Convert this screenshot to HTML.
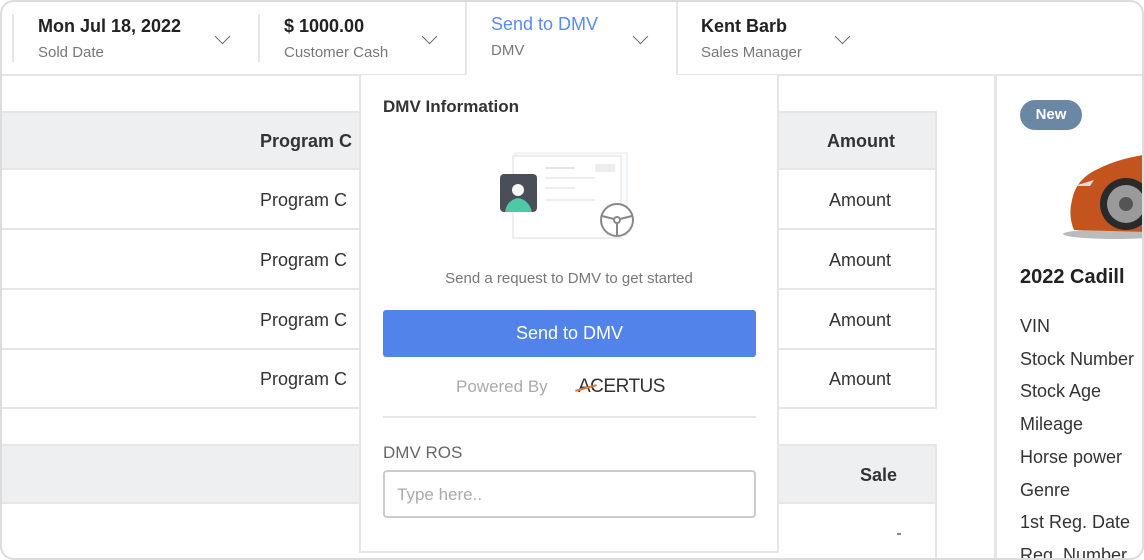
<!DOCTYPE html>
<html><head><meta charset="utf-8"><style>
*{box-sizing:border-box;margin:0;padding:0}
body{width:1144px;height:560px;background:#fff;font-family:"Liberation Sans",sans-serif;overflow:hidden;position:relative}
.frame{position:absolute;left:0;top:0;width:1144px;height:560px;border-radius:14px;overflow:hidden;background:#fff}
.border{position:absolute;left:0;top:0;width:1144px;height:560px;border:2px solid #dcdcdc;border-radius:14px;pointer-events:none}
.abs{position:absolute}
.topline{left:0;top:74px;width:1144px;height:2px;background:#e6e6e6}
.sep{width:2px;background:#e6e6e6;top:14px;height:48px}
.t1{font-size:18px;color:#222;font-weight:bold}
.t2{font-size:15px;color:#777}
.chev{width:11px;height:11px;border-right:1.5px solid #666;border-bottom:1.5px solid #666;transform:rotate(45deg)}
.hdr{background:#eeeff1}
.row{border-bottom:2px solid #e6e6e6}
.cell{font-size:18px;color:#333}
</style></head><body>
<div class="frame">
<div class="abs topline"></div>
<div class="abs sep" style="left:12px"></div>
<div class="abs t1" style="left:38px;top:16px">Mon Jul 18, 2022</div>
<div class="abs t2" style="left:38px;top:44px">Sold Date</div>
<div class="abs chev" style="left:217px;top:31px"></div>
<div class="abs sep" style="left:258px"></div>
<div class="abs t1" style="left:284px;top:16px">$ 1000.00</div>
<div class="abs t2" style="left:284px;top:44px">Customer Cash</div>
<div class="abs chev" style="left:424px;top:31px"></div>
<div class="abs" style="left:465px;top:0;width:213px;height:77px;background:#fff;border-left:2px solid #e6e6e6;border-right:2px solid #e6e6e6"></div>
<div class="abs t1" style="left:491px;top:14px;color:#5a8af0;font-weight:normal">Send to DMV</div>
<div class="abs t2" style="left:491px;top:42px">DMV</div>
<div class="abs chev" style="left:635px;top:31px"></div>
<div class="abs t1" style="left:701px;top:16px">Kent Barb</div>
<div class="abs t2" style="left:701px;top:44px">Sales Manager</div>
<div class="abs chev" style="left:837px;top:31px"></div>

<div class="abs" style="left:0;top:111px;width:937px;height:298px;border:2px solid #e6e6e6;border-left:none"></div>
<div class="abs hdr" style="left:0;top:113px;width:935px;height:57px;border-bottom:2px solid #e6e6e6"></div>
<div class="abs cell" style="left:260px;top:131px;font-weight:bold;color:#333">Program C</div>
<div class="abs cell" style="left:827px;top:131px;font-weight:bold">Amount</div>
<div class="abs row" style="left:0;top:170px;width:935px;height:60px"></div>
<div class="abs row" style="left:0;top:230px;width:935px;height:60px"></div>
<div class="abs row" style="left:0;top:290px;width:935px;height:60px"></div>
<div class="abs cell" style="left:260px;top:190px">Program C</div><div class="abs cell" style="left:829px;top:190px">Amount</div>
<div class="abs cell" style="left:260px;top:250px">Program C</div><div class="abs cell" style="left:829px;top:250px">Amount</div>
<div class="abs cell" style="left:260px;top:310px">Program C</div><div class="abs cell" style="left:829px;top:310px">Amount</div>
<div class="abs cell" style="left:260px;top:369px">Program C</div><div class="abs cell" style="left:829px;top:369px">Amount</div>

<div class="abs" style="left:0;top:444px;width:937px;height:120px;border:2px solid #e6e6e6;border-left:none;border-bottom:none"></div>
<div class="abs hdr" style="left:0;top:446px;width:935px;height:58px;border-bottom:2px solid #e6e6e6"></div>
<div class="abs cell" style="left:860px;top:465px;font-weight:bold">Sale</div>
<div class="abs" style="left:897px;top:533px;width:4px;height:2px;background:#888"></div>

<div class="abs" style="left:994px;top:76px;width:3px;height:484px;background:#e6e6e6"></div>
<div class="abs" style="left:1020px;top:100px;width:62px;height:30px;border-radius:15px;background:#6a87a6;color:#fff;font-size:15px;font-weight:bold;text-align:center;line-height:30px">New</div>
<div class="abs" style="left:1050px;top:140px;width:100px;height:100px">
<svg width="100" height="100"><ellipse cx="65" cy="94" rx="52" ry="5" fill="#bbb"/><path d="M22 60 Q26 38 50 28 Q70 18 100 14 L100 92 L24 90 Q18 76 22 60 Z" fill="#c4541e"/><path d="M24 46 L44 40 L40 46 Z" fill="#ddd"/><circle cx="76" cy="64" r="26" fill="#2a2a2a"/><circle cx="76" cy="64" r="19" fill="#9a9a9a"/><circle cx="76" cy="64" r="7" fill="#555"/></svg></div>
<div class="abs" style="left:1020px;top:266px;font-size:20px;font-weight:bold;color:#222;white-space:nowrap">2022 Cadill</div>
<div class="abs" style="left:1020px;top:310px;font-size:18px;color:#333;line-height:32.7px;white-space:nowrap">VIN<br>Stock Number<br>Stock Age<br>Mileage<br>Horse power<br>Genre<br>1st Reg. Date<br>Reg. Number</div>

<div class="abs" style="left:359px;top:75px;width:420px;height:478px;background:#fff;border:2px solid #e6e6e6;border-top:none"></div>
<div class="abs" style="left:467px;top:74px;width:209px;height:3px;background:#fff"></div>
<div class="abs" style="left:383px;top:97px;font-size:17px;font-weight:bold;color:#333">DMV Information</div>
<svg class="abs" style="left:495px;top:148px" width="150" height="100">
<rect x="20" y="5" width="112" height="82" fill="#fafbfd" stroke="#e6e8ee"/>
<rect x="18" y="8" width="108" height="82" fill="#fff" stroke="#e8e8ec" stroke-width="1.5"/>
<line x1="50" y1="20" x2="80" y2="20" stroke="#e6e6ea" stroke-width="2"/><line x1="50" y1="30" x2="100" y2="30" stroke="#eee" stroke-width="2"/>
<rect x="100" y="16" width="20" height="8" fill="#eee"/>
<line x1="50" y1="40" x2="80" y2="40" stroke="#eee" stroke-width="2"/><line x1="50" y1="52" x2="100" y2="52" stroke="#eee" stroke-width="2"/>
<rect x="5" y="26" width="37" height="38" rx="4" fill="#4a4e58"/>
<path d="M10 64 Q12 52 23 50 Q34 52 37 64 Z" fill="#4fc9a4"/><circle cx="23" cy="42" r="6" fill="#f5f5f5"/>
<circle cx="122" cy="72" r="16" fill="#fff" stroke="#888" stroke-width="2"/><circle cx="122" cy="72" r="3" fill="none" stroke="#888" stroke-width="2"/><path d="M107 68 L119 71 M125 71 L137 68 M122 75 L122 88" stroke="#888" stroke-width="2"/>
</svg>
<div class="abs" style="left:360px;top:270px;width:418px;text-align:center;font-size:15px;color:#777">Send a request to DMV to get started</div>
<div class="abs" style="left:383px;top:310px;width:373px;height:47px;background:#5283ea;border-radius:3px;color:#fff;font-size:18px;text-align:center;line-height:47px">Send to DMV</div>
<div class="abs" style="left:456px;top:377px;font-size:17px;color:#aaa">Powered By</div>
<div class="abs" style="left:578px;top:376px;font-size:19px;color:#333;letter-spacing:-0.5px">ACERTUS</div>
<div class="abs" style="left:575px;top:387px;width:22px;height:2px;background:#e07a3a;transform:rotate(-15deg)"></div>
<div class="abs" style="left:383px;top:416px;width:373px;height:2px;background:#e6e6e6"></div>
<div class="abs" style="left:383px;top:443px;font-size:17px;color:#666">DMV ROS</div>
<div class="abs" style="left:383px;top:470px;width:373px;height:48px;border:2px solid #ccc;border-radius:4px;font-size:17px;color:#aaa;padding:13px 12px">Type here..</div>
</div>
<div class="border"></div>
</body></html>
